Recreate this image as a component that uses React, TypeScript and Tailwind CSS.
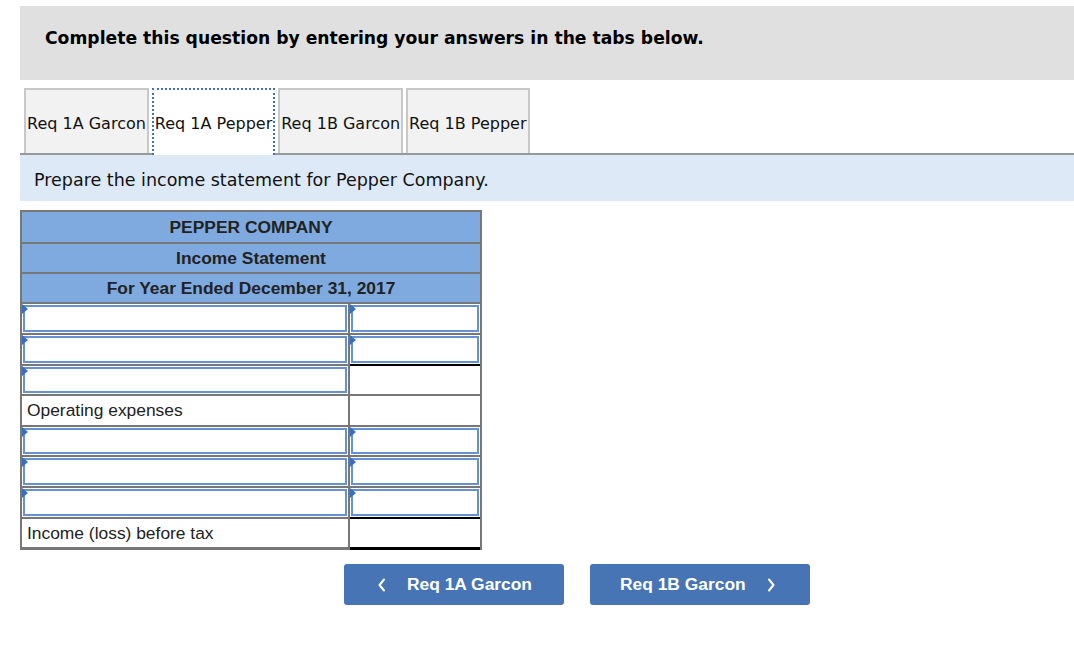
import React from "react";

const Tri = () => (
  <span className="absolute left-0 top-0 w-0 h-0 border-t-[5px] border-b-[5px] border-l-[6px] border-t-transparent border-b-transparent border-l-[#3a6fc0]" />
);

const InputCell = ({ h }: { h: string }) => (
  <div className={"bg-white p-[1px] relative " + h}>
    <div className="w-full h-full border-2 border-[#6592d4]" />
    <Tri />
  </div>
);

const BlankCell = ({ h, top }: { h: string; top?: boolean }) => (
  <div className={"bg-white " + h + (top ? " border-t-2 border-black box-content -mt-[2px]" : "")} />
);

const LabelCell = ({ text, h }: { text: string; h: string }) => (
  <div className={"bg-white flex items-center pl-[5px] text-[17.4px] text-[#222] " + h}>{text}</div>
);

const HeaderRow = ({ text, h }: { text: string; h: string }) => (
  <div className={"col-span-2 bg-[#7eaadf] flex items-center justify-center font-bold text-[17.4px] text-[#222] " + h}>
    {text}
  </div>
);

const Chev = ({ dir }: { dir: "l" | "r" }) => (
  <svg width="10" height="16" viewBox="0 0 10 16" fill="none" stroke="white" strokeWidth="2" strokeLinecap="round" strokeLinejoin="round">
    {dir === "l" ? <polyline points="7,2.5 2.5,8 7,13.5" /> : <polyline points="3,2.5 7.5,8 3,13.5" />}
  </svg>
);

export default function App() {
  const tab = "h-[65px] flex items-center px-[1px] pt-[4px] text-[16px] text-[#111] border-2 border-b-0";
  const verdana = { fontFamily: '"DejaVu Sans", Verdana, sans-serif' };
  return (
    <div className="min-h-[654px] bg-white pl-5 pt-[6px]" style={{ fontFamily: '"Liberation Sans", Arial, sans-serif' }}>
      <div className="h-[74px] bg-[#e0e0e0] pl-[25px] pt-[20px]">
        <div className="font-bold text-[17.2px] text-black" style={verdana}>
          Complete this question by entering your answers in the tabs below.
        </div>
      </div>
      <div className="mt-[8px] flex items-end pl-[4px] gap-[3px] border-b-2 border-[#999]" style={verdana}>
        <div className={tab + " bg-[#f2f2f2] border-[#c8c8c8]"}>Req 1A Garcon</div>
        <div className={tab + " bg-white border-dotted border-[#3f72bd] -mb-[2px] h-[67px] pb-[2px]"}>Req 1A Pepper</div>
        <div className={tab + " bg-[#f2f2f2] border-[#c8c8c8]"}>Req 1B Garcon</div>
        <div className={tab + " bg-[#f2f2f2] border-[#c8c8c8]"}>Req 1B Pepper</div>
      </div>
      <div className="h-[46px] bg-[#dde9f7] flex items-center pl-[14px] pt-[5px] text-[17.5px] text-[#111]" style={verdana}>
        Prepare the income statement for Pepper Company.
      </div>
      <div className="mt-[9px] w-[462px] grid grid-cols-[326px_130px] gap-[2px] bg-[#777] p-[2px]">
        <HeaderRow h="h-[30px]" text="PEPPER COMPANY" />
        <HeaderRow h="h-[28px]" text="Income Statement" />
        <HeaderRow h="h-[28px]" text="For Year Ended December 31, 2017" />
        <InputCell h="h-[29px]" />
        <InputCell h="h-[29px]" />
        <InputCell h="h-[29px]" />
        <InputCell h="h-[29px]" />
        <InputCell h="h-[28px]" />
        <BlankCell h="h-[28px]" top />
        <LabelCell h="h-[29px]" text="Operating expenses" />
        <BlankCell h="h-[29px]" />
        <InputCell h="h-[28px]" />
        <InputCell h="h-[28px]" />
        <InputCell h="h-[29px]" />
        <InputCell h="h-[29px]" />
        <InputCell h="h-[29px]" />
        <InputCell h="h-[29px]" />
        <LabelCell h="h-[28px]" text="Income (loss) before tax" />
        <div className="bg-white h-[28px] border-t-2 border-b-[3px] border-black box-content -mt-[2px] -mb-[2px]" />
      </div>
      <div className="mt-[14px] ml-[324px] flex gap-[26px]">
        <button className="w-[220px] h-[41px] rounded-[3px] bg-[#4674b5] text-white font-bold text-[17.4px] flex items-center pl-[33px]">
          <Chev dir="l" />
          <span className="ml-[20px]">Req 1A Garcon</span>
        </button>
        <button className="w-[220px] h-[41px] rounded-[3px] bg-[#4674b5] text-white font-bold text-[17.4px] flex items-center pl-[30px]">
          <span>Req 1B Garcon</span>
          <span className="ml-[20px]"><Chev dir="r" /></span>
        </button>
      </div>
    </div>
  );
}
